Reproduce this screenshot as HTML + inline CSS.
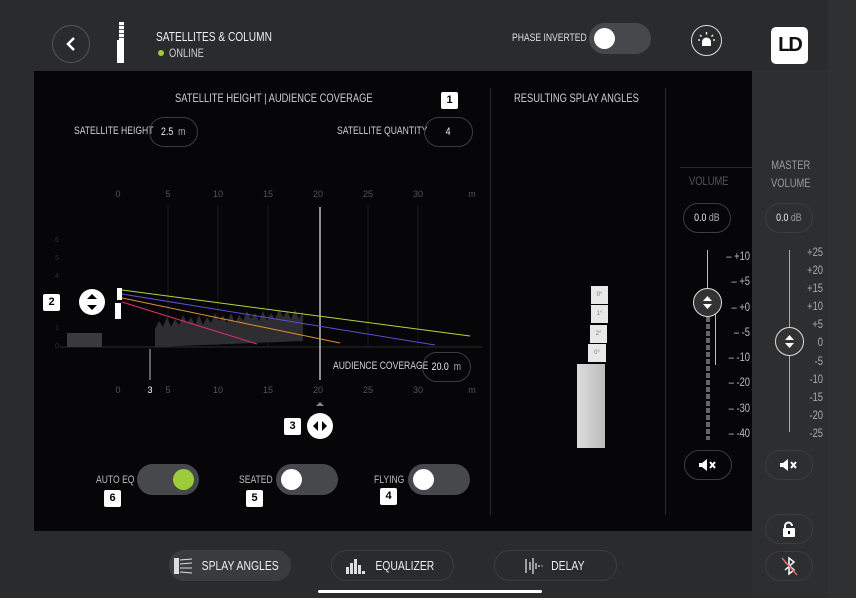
<!DOCTYPE html>
<html><head><meta charset="utf-8"><style>
*{margin:0;padding:0;box-sizing:border-box}
body{width:860px;height:604px;background:#fff;overflow:hidden;font-family:"Liberation Sans",sans-serif;color:#ddd;position:relative}
.a{position:absolute}
.t{position:absolute;white-space:nowrap;font-size:11px;color:#cfcfcf;transform:scaleX(.78);transform-origin:0 0}
.r{transform-origin:100% 0}
.pill{position:absolute;border:1.5px solid #3c3d40;border-radius:16px;color:#eee;font-size:11px;display:flex;align-items:center;justify-content:center}
.pill span.c{display:inline-block;transform:scaleX(.8)}
.badge{position:absolute;width:17px;height:17px;background:#fff;color:#000;font-weight:bold;font-size:11px;border-radius:2px;text-align:center;line-height:17px}
.tog{position:absolute;width:62px;height:31px;border-radius:16px;background:#47484b}
.tog i{position:absolute;top:5px;width:21px;height:21px;border-radius:50%;background:#fff}
.circ{position:absolute;border-radius:50%;border:1.5px solid #aaa}
</style></head><body>
<div class="a" style="left:0;top:0;width:856px;height:598px;background:#2a2b2d"></div>
<div class="a" style="left:828px;top:0;width:28px;height:598px;background:#2f3032"></div>
<div class="a" style="left:752px;top:70px;width:76px;height:528px;background:#2d2e30"></div>
<!-- header -->
<div class="circ" style="left:52px;top:25px;width:38px;height:38px;border-color:#555"></div>
<svg class="a" style="left:52px;top:25px" width="38" height="38"><path d="M22 13l-6 6 6 6" stroke="#fff" stroke-width="2.5" fill="none"/></svg>
<div class="a" style="left:117px;top:40px;width:7px;height:23px;background:#fff"></div>
<div class="a" style="left:119px;top:22px;width:5px;height:18px;background:repeating-linear-gradient(#fff 0 3px,#555 3px 4px)"></div>
<div class="t" style="left:156px;top:29px;font-size:13px;color:#eee">SATELLITES &amp; COLUMN</div>
<div class="a" style="left:158px;top:50px;width:6px;height:6px;border-radius:50%;background:#9ccc3c"></div>
<div class="t" style="left:169px;top:46px;font-size:12px">ONLINE</div>
<div class="t" style="left:512px;top:32px;font-size:11px;color:#ddd">PHASE INVERTED</div>
<div class="tog" style="left:589px;top:23px"><i style="left:5px"></i></div>
<div class="circ" style="left:691px;top:25px;width:31px;height:31px;border-color:#ddd"></div>
<svg class="a" style="left:691px;top:25px" width="31" height="31"><path d="M11 21v-4a4.5 4.5 0 0 1 9 0v4z" fill="#fff"/><g stroke="#fff" stroke-width="1.3"><line x1="15.5" y1="7" x2="15.5" y2="9.5"/><line x1="9" y1="10" x2="10.5" y2="11.5"/><line x1="22" y1="10" x2="20.5" y2="11.5"/><line x1="7" y1="15" x2="9" y2="15"/><line x1="22" y1="15" x2="24" y2="15"/></g></svg>
<div class="a" style="left:771px;top:27px;width:37px;height:37px;background:#fff;border-radius:5px;color:#111;font:bold 20px 'Liberation Sans',sans-serif;text-align:center;line-height:37px;letter-spacing:-2px">LD</div>
<!-- main panel -->
<div class="a" style="left:34px;top:71px;width:718px;height:460px;background:#060608"></div>
<div class="a" style="left:490px;top:88px;width:1px;height:427px;background:#2a2a2c"></div>
<div class="a" style="left:665px;top:88px;width:1px;height:427px;background:#2a2a2c"></div>
<div class="a" style="left:680px;top:167px;width:72px;height:1px;background:#2a2a2c"></div>
<div class="t" style="left:175px;top:91px;font-size:12px">SATELLITE HEIGHT | AUDIENCE COVERAGE</div>
<div class="t" style="left:514px;top:91px;font-size:12px">RESULTING SPLAY ANGLES</div>
<div class="badge" style="left:441px;top:92px">1</div>
<div class="t" style="left:74px;top:125px;font-size:11px">SATELLITE HEIGHT</div>
<div class="pill" style="left:149px;top:117px;width:49px;height:30px"><span class="c">2.5&nbsp; <span style="color:#aaa">m</span></span></div>
<div class="t" style="left:337px;top:125px;font-size:11px">SATELLITE QUANTITY</div>
<div class="pill" style="left:424px;top:117px;width:49px;height:30px"><span class="c">4</span></div>
<!-- chart -->
<svg class="a" style="left:34px;top:180px" width="456" height="270" viewBox="34 180 456 270" font-family="Liberation Sans,sans-serif" font-size="9">
<g fill="#555" text-anchor="middle">
<text x="118" y="197">0</text><text x="168" y="197">5</text><text x="218" y="197">10</text><text x="268" y="197">15</text><text x="318" y="197">20</text><text x="368" y="197">25</text><text x="418" y="197">30</text><text x="472" y="197">m</text>
<text x="118" y="393">0</text><text x="168" y="393">5</text><text x="218" y="393">10</text><text x="268" y="393">15</text><text x="318" y="393">20</text><text x="368" y="393">25</text><text x="418" y="393">30</text><text x="472" y="393">m</text>
</g>
<g fill="#333" text-anchor="middle" font-size="7"><text x="57" y="242">6</text><text x="57" y="260">5</text><text x="57" y="278">4</text><text x="57" y="330">1</text><text x="57" y="348">0</text></g>
<text x="150" y="393" fill="#fff" text-anchor="middle">3</text>
<g stroke="#1a1a1c"><line x1="168" y1="205" x2="168" y2="347"/><line x1="218" y1="205" x2="218" y2="347"/><line x1="268" y1="205" x2="268" y2="347"/><line x1="368" y1="205" x2="368" y2="347"/><line x1="418" y1="205" x2="418" y2="347"/></g>
<line x1="60" y1="347" x2="482" y2="347" stroke="#2a2a2c"/>
<g fill="#2e2e30"><path d="M155 347v-18l4-8 4 6 4-10 4 10 4-8 4 6 4-10 4 8 4-6 4 8 4-10 4 10 4-8 4 6 4-10 4 8 4-6 4 8 4-10 4 10 4-8 4 6 4-10 4 8 4-6 4 8 4-10 4 10 4-8 4 6 4-10 4 8 4-6 4 8 4-10 4 10 4-8v30z"/></g>
<rect x="67" y="333" width="35" height="14" fill="#3a3a3c"/>
<line x1="320" y1="207" x2="320" y2="380" stroke="#bbb" stroke-width="1.5"/>
<line x1="150" y1="349" x2="150" y2="380" stroke="#bbb"/>
<line x1="122" y1="290" x2="470" y2="336" stroke="#b4d43c"/>
<line x1="122" y1="294" x2="435" y2="345" stroke="#5a4fd6"/>
<line x1="122" y1="298" x2="340" y2="343" stroke="#e0922e"/>
<line x1="122" y1="302" x2="257" y2="344" stroke="#e0306a"/>
<rect x="117" y="288" width="5" height="12" fill="#fff"/><rect x="115" y="303" width="6" height="16" fill="#fff"/>
<circle cx="92" cy="302" r="13" fill="#fff"/>
<path d="M87 299l5-5 5 5zM87 305l5 5 5-5z" fill="#000"/>
<polygon points="320,402 316,406 324,406" fill="#888"/>
<circle cx="320" cy="426" r="13" fill="#fff"/>
<path d="M318 421l-5 5 5 5zM322 421l5 5-5 5z" fill="#000"/>
</svg>
<div class="badge" style="left:43px;top:294px">2</div>
<div class="badge" style="left:284px;top:418px">3</div>
<div class="t" style="left:333px;top:360px;font-size:11px">AUDIENCE COVERAGE</div>
<div class="pill" style="left:422px;top:352px;width:49px;height:30px"><span class="c">20.0&nbsp; <span style="color:#aaa">m</span></span></div>
<!-- toggles -->
<div class="t" style="left:96px;top:474px;font-size:11px;color:#bbb">AUTO EQ</div>
<div class="tog" style="left:137px;top:464px"><i style="left:36px;background:#9ccc3c"></i></div>
<div class="badge" style="left:104px;top:490px">6</div>
<div class="t" style="left:239px;top:474px;font-size:11px;color:#bbb">SEATED</div>
<div class="tog" style="left:276px;top:464px"><i style="left:5px"></i></div>
<div class="badge" style="left:246px;top:490px">5</div>
<div class="t" style="left:374px;top:474px;font-size:11px;color:#bbb">FLYING</div>
<div class="tog" style="left:408px;top:464px"><i style="left:5px"></i></div>
<div class="badge" style="left:380px;top:488px">4</div>
<!-- splay graphic -->
<div class="a" style="left:591px;top:286px;width:17px;height:18px;background:#e8e8e8;font-size:6px;color:#777;text-align:center;line-height:18px">0°</div>
<div class="a" style="left:591px;top:305px;width:17px;height:18px;background:#e8e8e8;font-size:6px;color:#777;text-align:center;line-height:18px">1°</div>
<div class="a" style="left:590px;top:325px;width:17px;height:18px;background:#e8e8e8;font-size:6px;color:#777;text-align:center;line-height:18px">2°</div>
<div class="a" style="left:588px;top:344px;width:18px;height:18px;background:#e8e8e8;font-size:6px;color:#777;text-align:center;line-height:18px">0°</div>
<div class="a" style="left:577px;top:364px;width:28px;height:84px;background:linear-gradient(90deg,#ddd,#bbb)"></div>
<!-- volume -->
<div class="t" style="left:689px;top:174px;font-size:12px;color:#555">VOLUME</div>
<div class="pill" style="left:683px;top:203px;width:48px;height:30px"><span class="c">0.0 <span style="color:#aaa">dB</span></span></div>
<div class="a" style="left:707px;top:250px;width:1px;height:50px;background:#bbb"></div>
<div class="a" style="left:715px;top:303px;width:1px;height:62px;background:#bbb"></div>
<div class="a" style="left:706px;top:310px;width:4px;height:130px;background:repeating-linear-gradient(#666 0 5px,transparent 5px 7px)"></div>
<div class="circ" style="left:693px;top:288px;width:29px;height:29px;border-color:#ddd;background:#333"></div>
<svg class="a" style="left:693px;top:288px" width="29" height="29"><path d="M10 13l4.5-5 4.5 5zM10 16l4.5 5 4.5-5z" fill="#fff"/></svg>
<div class="t r" style="left:700px;top:244px;font-size:12px;color:#bbb;line-height:25.3px;text-align:right;width:50px">– +10<br>– +5<br>– +0<br>– -5<br>– -10<br>– -20<br>– -30<br>– -40</div>
<div class="pill" style="left:684px;top:450px;width:48px;height:30px"><svg width="22" height="14"><path d="M2 5h3l5-4v12l-5-4H2z" fill="#fff"/><path d="M13 4l5 6M18 4l-5 6" stroke="#fff" stroke-width="2"/></svg></div>
<div class="t" style="left:771px;top:156px;font-size:12px;color:#999;text-align:center;line-height:18px">MASTER<br>VOLUME</div>
<div class="pill" style="left:765px;top:203px;width:48px;height:30px"><span class="c">0.0 <span style="color:#999">dB</span></span></div>
<div class="a" style="left:789px;top:250px;width:1px;height:182px;background:#aaa"></div>
<div class="circ" style="left:775px;top:327px;width:29px;height:29px;border-color:#ddd;background:#333"></div>
<svg class="a" style="left:775px;top:327px" width="29" height="29"><path d="M10 13l4.5-5 4.5 5zM10 16l4.5 5 4.5-5z" fill="#fff"/></svg>
<div class="t r" style="left:773px;top:243px;font-size:12px;color:#aaa;line-height:18.1px;text-align:right;width:50px">+25<br>+20<br>+15<br>+10<br>+5<br>0<br>-5<br>-10<br>-15<br>-20<br>-25</div>
<div class="pill" style="left:765px;top:450px;width:48px;height:30px"><svg width="22" height="14"><path d="M2 5h3l5-4v12l-5-4H2z" fill="#fff"/><path d="M13 4l5 6M18 4l-5 6" stroke="#fff" stroke-width="2"/></svg></div>
<div class="pill" style="left:765px;top:514px;width:48px;height:30px"><svg width="18" height="18"><path d="M5 8V6a3.5 3.5 0 0 1 7 0" stroke="#fff" stroke-width="2" fill="none"/><rect x="3" y="8" width="12" height="9" rx="1" fill="#fff"/><rect x="8" y="11" width="2" height="3" fill="#000"/></svg></div>
<div class="pill" style="left:765px;top:551px;width:48px;height:30px"><svg width="22" height="22"><path d="M7 7l9 8-5 4V3l5 4-9 8" stroke="#fff" stroke-width="1.5" fill="none"/><line x1="4" y1="3" x2="19" y2="20" stroke="#d66" stroke-width="1.5"/></svg></div>
<!-- bottom nav -->
<div class="pill" style="left:169px;top:550px;width:122px;height:31px;background:#3a3b3e"><svg width="22" height="18"><rect x="2" y="1" width="5" height="16" fill="#ddd"/><g stroke="#ddd"><line x1="8" y1="3" x2="20" y2="2"/><line x1="8" y1="7" x2="20" y2="6"/><line x1="8" y1="11" x2="20" y2="11"/><line x1="8" y1="15" x2="20" y2="16"/></g></svg><span class="c" style="font-size:13px;margin-left:-2px">SPLAY ANGLES</span></div>
<div class="pill" style="left:331px;top:550px;width:123px;height:31px"><svg width="22" height="16"><g fill="#ddd"><rect x="2" y="9" width="3" height="7"/><rect x="6" y="5" width="3" height="11"/><rect x="10" y="1" width="3" height="15"/><rect x="14" y="7" width="3" height="9"/><rect x="18" y="13" width="3" height="3"/></g></svg><span class="c" style="font-size:13px;margin-left:2px">EQUALIZER</span></div>
<div class="pill" style="left:494px;top:550px;width:123px;height:31px"><svg width="22" height="18"><g stroke="#ddd" stroke-width="1.3"><line x1="3" y1="2" x2="3" y2="16"/><line x1="7" y1="5" x2="7" y2="13"/><line x1="10" y1="1" x2="10" y2="17"/><line x1="13" y1="6" x2="13" y2="12"/><line x1="16" y1="8" x2="16" y2="10"/><line x1="19" y1="8.5" x2="19" y2="9.5"/></g></svg><span class="c" style="font-size:13px;margin-left:2px">DELAY</span></div>
<div class="a" style="left:318px;top:590px;width:224px;height:3px;border-radius:2px;background:#fff"></div>
</body></html>
